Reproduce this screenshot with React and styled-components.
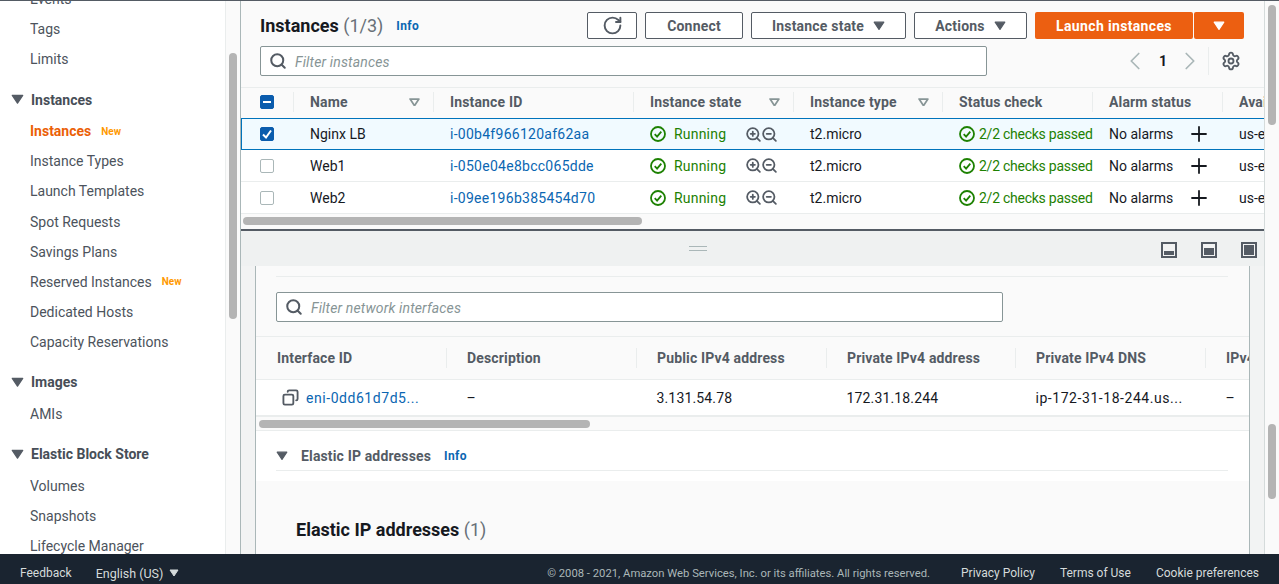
import styled, { createGlobalStyle } from "styled-components";
import { ZoomIn, ZoomOut, Plus, RotateCw, Search, ChevronLeft, ChevronRight, Settings, Copy } from "lucide-react";

const GlobalStyle = createGlobalStyle`
  html, body {
    margin: 0;
    height: 100%;
    overflow: hidden;
    font-family: "Roboto", "Liberation Sans", sans-serif;
    font-size: 14px;
    color: #16191f;
  }
  * { box-sizing: border-box; }
`;

const navGroups = [
  { items: [{ label: "Events" }, { label: "Tags" }, { label: "Limits" }] },
  {
    title: "Instances",
    items: [
      { label: "Instances", active: true, isNew: true },
      { label: "Instance Types" },
      { label: "Launch Templates" },
      { label: "Spot Requests" },
      { label: "Savings Plans" },
      { label: "Reserved Instances", isNew: true },
      { label: "Dedicated Hosts" },
      { label: "Capacity Reservations" },
    ],
  },
  { title: "Images", items: [{ label: "AMIs" }] },
  {
    title: "Elastic Block Store",
    items: [{ label: "Volumes" }, { label: "Snapshots" }, { label: "Lifecycle Manager" }],
  },
];

const instances = [
  { name: "Nginx LB", id: "i-00b4f966120af62aa", selected: true },
  { name: "Web1", id: "i-050e04e8bcc065dde" },
  { name: "Web2", id: "i-09ee196b385454d70" },
];

const instanceColumns = "53px 140px 200px 160px 149px 150px 130px 1fr";
const networkColumns = "191px 190px 190px 189px 190px 1fr";

function Caret({ size = 12, color = "#545b64", hollow }) {
  return (
    <svg width={size} height={size * 0.8} viewBox="0 0 10 8">
      <path
        d="M1 1h8L5 7z"
        fill={hollow ? "none" : color}
        stroke={color}
        strokeWidth={hollow ? 1.6 : 1}
        strokeLinejoin="round"
      />
    </svg>
  );
}

function CheckCircle() {
  return (
    <svg width="16" height="16" viewBox="0 0 16 16" fill="none" stroke="#1d8102" strokeWidth="1.8">
      <circle cx="8" cy="8" r="7" />
      <path d="M4.7 8.2 7.1 10.6 11.3 5.7" />
    </svg>
  );
}

function PanelIcon({ fill }) {
  return (
    <svg width="16" height="16" viewBox="0 0 16 16">
      <rect width="16" height="16" fill="#545b64" />
      <rect x="2" y="2" width="12" height="12" fill="#f2f3f3" />
      <rect x="3" y={14 - fill - 1} width="10" height={fill} fill="#545b64" />
    </svg>
  );
}

export default function App() {
  return (
    <Page>
      <GlobalStyle />
      <Workspace>
        <Sidebar>
          <NavList>
            {navGroups.map((group, index) => (
              <NavGroup key={index}>
                {group.title && (
                  <NavTitle>
                    <Caret size={13} />
                    {group.title}
                  </NavTitle>
                )}
                {group.items.map((item) => (
                  <NavItem key={item.label} $active={item.active}>
                    {item.label}
                    {item.isNew && <NewBadge>New</NewBadge>}
                  </NavItem>
                ))}
              </NavGroup>
            ))}
          </NavList>
        </Sidebar>
        <ScrollGutter $top={52}>
          <ScrollThumb />
        </ScrollGutter>

        <Main>
          <Panes>
            <TopPane>
              <Toolbar>
                <Title>
                  Instances <Count>(1/3)</Count>
                </Title>
                <InfoLink>Info</InfoLink>
                <Actions>
                  <OutlineButton $width={50}>
                    <RotateCw size={21} strokeWidth={2.2} />
                  </OutlineButton>
                  <OutlineButton $width={98}>Connect</OutlineButton>
                  <OutlineButton $width={155}>
                    Instance state <Caret />
                  </OutlineButton>
                  <OutlineButton $width={113}>
                    Actions <Caret />
                  </OutlineButton>
                  <SplitButton>
                    <PrimaryButton $width={158}>Launch instances</PrimaryButton>
                    <PrimaryButton $width={50}>
                      <Caret color="#fff" />
                    </PrimaryButton>
                  </SplitButton>
                </Actions>
              </Toolbar>

              <FilterRow>
                <FilterBox $width={727}>
                  <Search size={18} color="#545b64" strokeWidth={2.7} />
                  <Placeholder>Filter instances</Placeholder>
                </FilterBox>
                <Pager>
                  <ChevronLeft size={30} color="#aab7b8" strokeWidth={1.4} />
                  <PageNumber>1</PageNumber>
                  <ChevronRight size={30} color="#aab7b8" strokeWidth={1.4} />
                  <PagerDivider />
                  <Settings size={20} color="#545b64" strokeWidth={2.2} />
                </Pager>
              </FilterRow>

              <HeaderRow $columns={instanceColumns}>
                <HeaderCell $narrow>
                  <CheckBox $checked>
                    <MinusMark />
                  </CheckBox>
                </HeaderCell>
                <HeaderCell>
                  Name
                  <Sorter>
                    <Caret size={11} hollow color="#879596" />
                  </Sorter>
                </HeaderCell>
                <HeaderCell>Instance ID</HeaderCell>
                <HeaderCell>
                  Instance state
                  <Sorter>
                    <Caret size={11} hollow color="#879596" />
                  </Sorter>
                </HeaderCell>
                <HeaderCell>
                  Instance type
                  <Sorter>
                    <Caret size={11} hollow color="#879596" />
                  </Sorter>
                </HeaderCell>
                <HeaderCell>Status check</HeaderCell>
                <HeaderCell>Alarm status</HeaderCell>
                <HeaderCell $last>Avail</HeaderCell>
              </HeaderRow>

              {instances.map((row) => (
                <InstanceRow key={row.id} $columns={instanceColumns} $selected={row.selected}>
                  <Cell $narrow>
                    <CheckBox $checked={row.selected}>
                      {row.selected && (
                        <svg width="12" height="12" viewBox="0 0 12 12">
                          <path d="M2 6.5 5 9.5 10 2.5" fill="none" stroke="#fff" strokeWidth="2" />
                        </svg>
                      )}
                    </CheckBox>
                  </Cell>
                  <Cell>{row.name}</Cell>
                  <Cell>
                    <IdLink>{row.id}</IdLink>
                  </Cell>
                  <Cell>
                    <Status $gap={8} $spacing={0.2}>
                      <CheckCircle />
                      Running
                    </Status>
                    <ZoomIcons>
                      <ZoomIn size={17} strokeWidth={2.5} />
                      <ZoomOut size={17} strokeWidth={2.5} />
                    </ZoomIcons>
                  </Cell>
                  <Cell>t2.micro</Cell>
                  <Cell>
                    <Status $gap={4} $spacing={-0.25}>
                      <CheckCircle />
                      2/2 checks passed
                    </Status>
                  </Cell>
                  <Cell>
                    No alarms
                    <AlarmAdd>
                      <Plus size={24} strokeWidth={1.8} color="#16191f" />
                    </AlarmAdd>
                  </Cell>
                  <Cell>us-e</Cell>
                </InstanceRow>
              ))}

              <TableScroll $pad={2} $thumb={399} />
            </TopPane>

            <SplitBar>
              <DragHandle />
              <PanelIcons>
                <PanelIcon fill={4} />
                <PanelIcon fill={7} />
                <PanelIcon fill={10} />
              </PanelIcons>
            </SplitBar>

            <BottomPane>
              <Details>
                <SectionLine />
                <FilterRow $inset>
                  <FilterBox $width={727}>
                    <Search size={18} color="#545b64" strokeWidth={2.7} />
                    <Placeholder>Filter network interfaces</Placeholder>
                  </FilterBox>
                </FilterRow>

                <NetworkHeader $columns={networkColumns}>
                  <HeaderCell $wide>Interface ID</HeaderCell>
                  <HeaderCell $wide>Description</HeaderCell>
                  <HeaderCell $wide>Public IPv4 address</HeaderCell>
                  <HeaderCell $wide>Private IPv4 address</HeaderCell>
                  <HeaderCell $wide>Private IPv4 DNS</HeaderCell>
                  <HeaderCell $wide $last>IPv4</HeaderCell>
                </NetworkHeader>

                <NetworkRow $columns={networkColumns}>
                  <NetworkCell>
                    <Copy size={17} color="#545b64" strokeWidth={2.6} style={{ transform: "scaleX(-1)" }} />
                    <EniLink>eni-0dd61d7d5...</EniLink>
                  </NetworkCell>
                  <NetworkValue>–</NetworkValue>
                  <NetworkValue>3.131.54.78</NetworkValue>
                  <NetworkValue>172.31.18.244</NetworkValue>
                  <NetworkValue $spacing={0.55}>ip-172-31-18-244.us...</NetworkValue>
                  <NetworkValue>–</NetworkValue>
                </NetworkRow>

                <TableScroll $pad={3} $thumb={331} $short />

                <Collapsible>
                  <CollapsibleHead>
                    <Caret size={12} />
                    <span>Elastic IP addresses</span>
                    <InfoLink>Info</InfoLink>
                  </CollapsibleHead>
                </Collapsible>

                <SubHeading>
                  Elastic IP addresses <Count>(1)</Count>
                </SubHeading>
              </Details>
            </BottomPane>
          </Panes>

          <PageScroll>
            <PageThumb $height={120} $top={4} />
            <PageThumb $height={75} $top={299} />
          </PageScroll>
        </Main>
      </Workspace>

      <Footer>
        <FooterLink>Feedback</FooterLink>
        <Language>
          English (US) <Caret size={10} color="#d5dbdb" />
        </Language>
        <Copyright>© 2008 - 2021, Amazon Web Services, Inc. or its affiliates. All rights reserved.</Copyright>
        <FooterLink>Privacy Policy</FooterLink>
        <FooterLink>Terms of Use</FooterLink>
        <FooterLink>Cookie preferences</FooterLink>
      </Footer>
    </Page>
  );
}

const Page = styled.div`
  width: 1279px;
  height: 584px;
  display: flex;
  flex-direction: column;
  overflow: hidden;
  background: #fff;
`;

const Workspace = styled.div`
  flex: 1;
  min-height: 0;
  display: flex;
  border-top: 1px solid #545b64;
`;

const Sidebar = styled.nav`
  width: 226px;
  flex: none;
  overflow: hidden;
  background: #fff;
  border-right: 1px solid #eaeded;
`;

const NavList = styled.div`
  margin-top: -17px;
`;

const NavGroup = styled.div`
  & + & {
    margin-top: 10.8px;
  }
`;

const NavTitle = styled.div`
  height: 31px;
  display: flex;
  align-items: center;
  gap: 7px;
  padding: 0 0 2px 11px;
  font-weight: 700;
  color: #474e57;
`;

const NavItem = styled.div`
  height: 30.14px;
  display: flex;
  align-items: center;
  padding-left: 30px;
  color: ${(p) => (p.$active ? "#eb5f07" : "#4c535c")};
  font-weight: ${(p) => (p.$active ? 700 : 400)};
`;

const NewBadge = styled.span`
  margin-left: 10px;
  font-size: 10px;
  font-weight: 700;
  color: #ff9900;
`;

const ScrollGutter = styled.div`
  width: 15px;
  flex: none;
  background: #fafafa;
  border-right: 1px solid #aab7b8;
  padding: ${(p) => p.$top}px 3px 0 3px;
`;

const ScrollThumb = styled.div`
  width: 8px;
  height: 266px;
  border-radius: 4px;
  background: #b4b4b4;
`;

const Main = styled.div`
  flex: 1;
  min-width: 0;
  display: flex;
`;

const Panes = styled.div`
  width: 1023px;
  display: flex;
  flex-direction: column;
`;

const TopPane = styled.section`
  height: 228px;
  flex: none;
  background: #fafafa;
  overflow: hidden;
`;

const Toolbar = styled.div`
  display: flex;
  align-items: center;
  height: 27px;
  margin-top: 11px;
  padding: 0 20px 0 19px;
`;

const Title = styled.h1`
  margin: 0;
  font-size: 18px;
  font-weight: 700;
  color: #16191f;
`;

const Count = styled.span`
  font-weight: 400;
  color: #687078;
`;

const InfoLink = styled.span`
  margin-left: 13px;
  font-size: 12px;
  font-weight: 700;
  letter-spacing: 0.4px;
  color: #0a66b2;
`;

const Actions = styled.div`
  margin-left: auto;
  display: flex;
  gap: 8px;
`;

const OutlineButton = styled.button`
  width: ${(p) => p.$width}px;
  height: 27px;
  display: flex;
  align-items: center;
  justify-content: center;
  gap: 9px;
  padding: 0;
  border: 1px solid #545b64;
  border-radius: 2px;
  background: #fff;
  color: #545b64;
  font: 700 14px "Roboto", sans-serif;
  letter-spacing: 0.2px;
`;

const SplitButton = styled.div`
  display: flex;
  gap: 1px;
`;

const PrimaryButton = styled.button`
  width: ${(p) => p.$width}px;
  height: 27px;
  display: flex;
  align-items: center;
  justify-content: center;
  padding: 0;
  border: 0;
  border-radius: 2px;
  background: #ec5f11;
  color: #fff;
  font: 700 14px "Roboto", sans-serif;
  letter-spacing: 0.35px;
`;

const FilterRow = styled.div`
  display: flex;
  align-items: center;
  margin-top: ${(p) => (p.$inset ? 15 : 7)}px;
  padding-left: ${(p) => (p.$inset ? 20 : 19)}px;
`;

const FilterBox = styled.div`
  width: ${(p) => p.$width}px;
  height: 30px;
  display: flex;
  align-items: center;
  gap: 8px;
  padding-left: 8px;
  background: #fff;
  border: 1px solid #879596;
  border-radius: 2px;
`;

const Placeholder = styled.span`
  padding-top: 2px;
  font-style: italic;
  letter-spacing: 0.15px;
  color: #879596;
`;

const Pager = styled.div`
  margin-left: auto;
  margin-right: 23px;
  display: flex;
  align-items: center;
  color: #16191f;
`;

const PageNumber = styled.span`
  width: 25px;
  padding-left: 1px;
  text-align: center;
  font-weight: 700;
`;

const PagerDivider = styled.span`
  width: 1px;
  height: 28px;
  margin: 0 12px 0 3px;
  background: #eaeded;
`;

const HeaderRow = styled.div`
  display: grid;
  grid-template-columns: ${(p) => p.$columns};
  height: 31px;
  margin-top: 11px;
  padding-bottom: 2px;
  align-items: center;
  border-top: 1px solid #eaeded;
`;

const HeaderCell = styled.div`
  display: flex;
  align-items: center;
  height: 20px;
  padding-left: ${(p) => (p.$narrow ? 19 : p.$wide ? 20 : 16)}px;
  font-weight: 700;
  letter-spacing: 0.15px;
  color: #545b64;
  white-space: nowrap;
  overflow: hidden;
  border-right: ${(p) => (p.$last ? "none" : "1px solid #eaeded")};
`;

const Sorter = styled.span`
  margin-left: auto;
  margin-right: 13px;
  display: flex;
`;

const InstanceRow = styled.div`
  display: grid;
  grid-template-columns: ${(p) => p.$columns};
  height: 32px;
  align-items: center;
  background: ${(p) => (p.$selected ? "#f1faff" : "#fff")};
  border-top: 1px solid ${(p) => (p.$selected ? "#0073bb" : "#eaeded")};
  border-bottom: 1px solid ${(p) => (p.$selected ? "#0073bb" : "#eaeded")};
  box-shadow: ${(p) => (p.$selected ? "inset 1px 0 0 #0073bb" : "none")};
  & + & {
    border-top: none;
  }
`;

const Cell = styled.div`
  display: flex;
  align-items: center;
  padding-left: ${(p) => (p.$narrow ? 19 : 16)}px;
  white-space: nowrap;
  overflow: hidden;
  color: #16191f;
`;

const CheckBox = styled.span`
  width: 14px;
  height: 14px;
  display: flex;
  align-items: center;
  justify-content: center;
  border-radius: 2px;
  border: 1px solid ${(p) => (p.$checked ? "#0a5cad" : "#aab7b8")};
  background: ${(p) => (p.$checked ? "#0a5cad" : "#fff")};
`;

const MinusMark = styled.span`
  width: 8px;
  height: 2px;
  background: #fff;
`;

const IdLink = styled.span`
  color: #0a66b2;
  letter-spacing: 0.27px;
`;

const EniLink = styled(IdLink)`
  letter-spacing: 0.55px;
`;

const Status = styled.span`
  display: flex;
  align-items: center;
  gap: ${(p) => p.$gap}px;
  letter-spacing: ${(p) => p.$spacing}px;
  color: #1d8102;
`;

const ZoomIcons = styled.span`
  display: flex;
  margin-left: 19px;
  color: #545b64;

  svg + svg {
    margin-left: -1px;
  }
`;

const AlarmAdd = styled.span`
  display: flex;
  margin-left: 14px;
`;

const TableScroll = styled.div`
  height: 13px;
  padding: 3px 0 0 ${(p) => p.$pad}px;
  background: ${(p) => (p.$short ? "#fafafa" : "transparent")};

  &::before {
    content: "";
    display: block;
    width: ${(p) => p.$thumb}px;
    height: 8px;
    border-radius: 4px;
    background: #b4b4b4;
  }
`;

const SplitBar = styled.div`
  height: 37px;
  flex: none;
  display: flex;
  align-items: center;
  padding-left: 448px;
  position: relative;
  background: #eff1f1;
  border-top: 2px solid #545b64;
`;

const DragHandle = styled.span`
  width: 18px;
  height: 5px;
  border-top: 1px solid #aab7b8;
  border-bottom: 1px solid #aab7b8;
`;

const PanelIcons = styled.div`
  position: absolute;
  right: 7px;
  top: 11px;
  display: flex;
  gap: 24px;
`;

const BottomPane = styled.section`
  flex: 1;
  min-height: 0;
  padding: 0 14px 0 14px;
  background: #f2f3f3;
  overflow: hidden;
`;

const Details = styled.div`
  height: 100%;
  overflow: hidden;
  background: #fafafa;
  border-left: 1px solid #aab7b8;
  border-right: 1px solid #aab7b8;
  padding-top: 10px;
`;

const SectionLine = styled.div`
  height: 1px;
  margin: 0 21px 0 20px;
  background: #eaeded;
`;

const NetworkHeader = styled.div`
  display: grid;
  grid-template-columns: ${(p) => p.$columns};
  height: 44px;
  margin-top: 14px;
  align-items: center;
  border-top: 1px solid #eaeded;
  border-bottom: 1px solid #eaeded;

  ${HeaderCell}:first-child {
    padding-left: 21px;
  }
`;

const NetworkRow = styled.div`
  display: grid;
  grid-template-columns: ${(p) => p.$columns};
  height: 37px;
  align-items: center;
  background: #fff;
  border-bottom: 2px solid #eaeded;
`;

const NetworkCell = styled.div`
  display: flex;
  align-items: center;
  gap: 7px;
  padding-left: 26px;
  white-space: nowrap;
`;

const NetworkValue = styled(Cell)`
  padding-left: 19.5px;
  letter-spacing: ${(p) => p.$spacing ?? 0.15}px;
`;

const Collapsible = styled.div`
  height: 51px;
  padding: 0 21px 0 20px;
  background: #fff;
  border-top: 1px solid #eaeded;
`;

const CollapsibleHead = styled.div`
  height: 40px;
  display: flex;
  align-items: center;
  padding-top: 10px;
  gap: 13px;
  font-weight: 700;
  letter-spacing: 0.15px;
  color: #545b64;
  border-bottom: 1px solid #eaeded;

  ${InfoLink} {
    margin-left: 0;
  }
`;

const SubHeading = styled.h2`
  margin: 38px 0 0 40px;
  font-size: 18px;
  font-weight: 700;
  color: #16191f;
`;

const PageScroll = styled.div`
  width: 15px;
  flex: none;
  overflow: hidden;
  background: #fafafa;
  border-left: 1px solid #d5dbdb;
`;

const PageThumb = styled.div`
  width: 8px;
  height: ${(p) => p.$height}px;
  margin: ${(p) => p.$top}px 0 0 3px;
  border-radius: 4px;
  background: #b4b4b4;
`;

const Footer = styled.footer`
  height: 30px;
  flex: none;
  display: flex;
  align-items: center;
  padding: 8px 20px 0;
  background: #1a2430;
  color: #d5dbdb;
  font-size: 12px;
  gap: 25px;
`;

const FooterLink = styled.span`
  color: #d5dbdb;
`;

const Language = styled.span`
  display: flex;
  align-items: center;
  gap: 6px;
  margin-left: -1px;
  font-size: 12.5px;
`;

const Copyright = styled.span`
  margin-left: auto;
  margin-right: 6px;
  color: #aab7b8;
  font-size: 11.25px;
`;
